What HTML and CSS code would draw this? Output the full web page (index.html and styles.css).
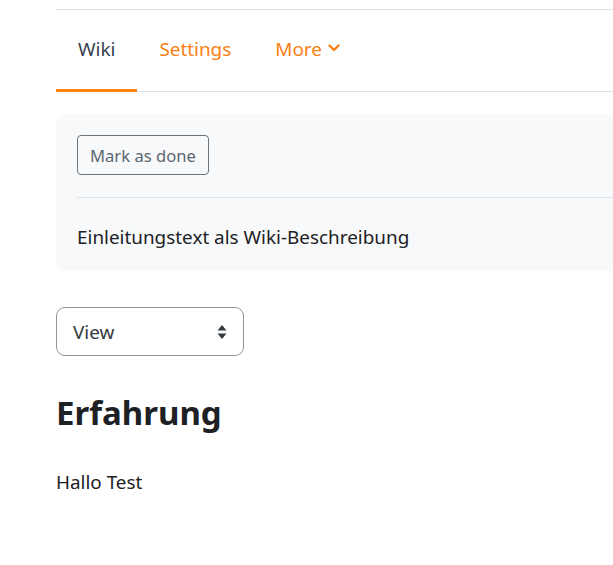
FILE: index.html
```html
<!DOCTYPE html>
<html>
<head>
<meta charset="utf-8">
<link rel="stylesheet" href="styles.css">
</head>
<body>
<div class="page">
  <nav class="tabs">
    <a class="tab active">Wiki</a>
    <a class="tab">Settings</a>
    <a class="tab">More <svg class="chev" width="12" height="8" viewBox="0 0 12 8"><path d="M1.5 1.5 L6 6 L10.5 1.5" fill="none" stroke="#f98012" stroke-width="2.4" stroke-linecap="round" stroke-linejoin="round"/></svg></a>
  </nav>
  <div class="activity">
    <div class="completion"><button class="btn">Mark as done</button></div>
    <div class="intro">Einleitungstext als Wiki-Beschreibung</div>
  </div>
  <div class="select">
    <span>View</span>
    <svg width="10" height="16" viewBox="0 0 10 16"><path d="M5 1 L9.5 6.5 H0.5 Z M5 15 L9.5 9.5 H0.5 Z" fill="#343a40"/></svg>
  </div>
  <h2 class="title">Erfahrung</h2>
  <p class="text">Hallo Test</p>
</div>
</body>
</html>
```

FILE: styles.css
```css
html, body { margin: 0; padding: 0; overflow: hidden; background: #fff; }
body { font-family: "Noto Sans", "Open Sans", sans-serif; color: #1d2125; font-size: 18.9px; }
.page { margin-left: 56px; width: 760px; padding-top: 9px; }
.tabs { display: flex; border-top: 1px solid #dee2e6; border-bottom: 1px solid #dee2e6; height: 81px; }
.tab { display: flex; align-items: center; padding: 0 22px; color: #f98012; font-size: 18.9px; border-bottom: 3px solid transparent; margin-bottom: -1px; padding-bottom: 2px; }
.tab.active { color: #354150; border-bottom-color: #f98012; }
.chev { margin-left: 6px; margin-top: -2px; }
.activity { margin-top: 22px; background: #f8f9fa; border-radius: 10px; padding: 21px 21px 21px; height: 115px; }
.completion { padding-bottom: 22px; border-bottom: 1px solid #dee2e6; }
.btn { font-family: inherit; font-size: 16.6px; color: #5c6670; background: transparent; border: 1px solid #6a737b; border-radius: 4px; height: 40px; padding: 0 12px; }
.intro { margin-top: 26px; font-size: 18.9px; }
.select { margin-top: 36px; width: 188px; height: 49px; border: 1px solid #8f959e; border-radius: 9px; display: flex; align-items: center; justify-content: space-between; padding: 0 16px 0 16px; box-sizing: border-box; font-size: 18.9px; color: #343a40; }
.title { font-size: 33px; font-weight: 700; margin: 37px 0 0; line-height: 1.2; }
.text { margin: 36px 0 0; font-size: 18.9px; }
```
